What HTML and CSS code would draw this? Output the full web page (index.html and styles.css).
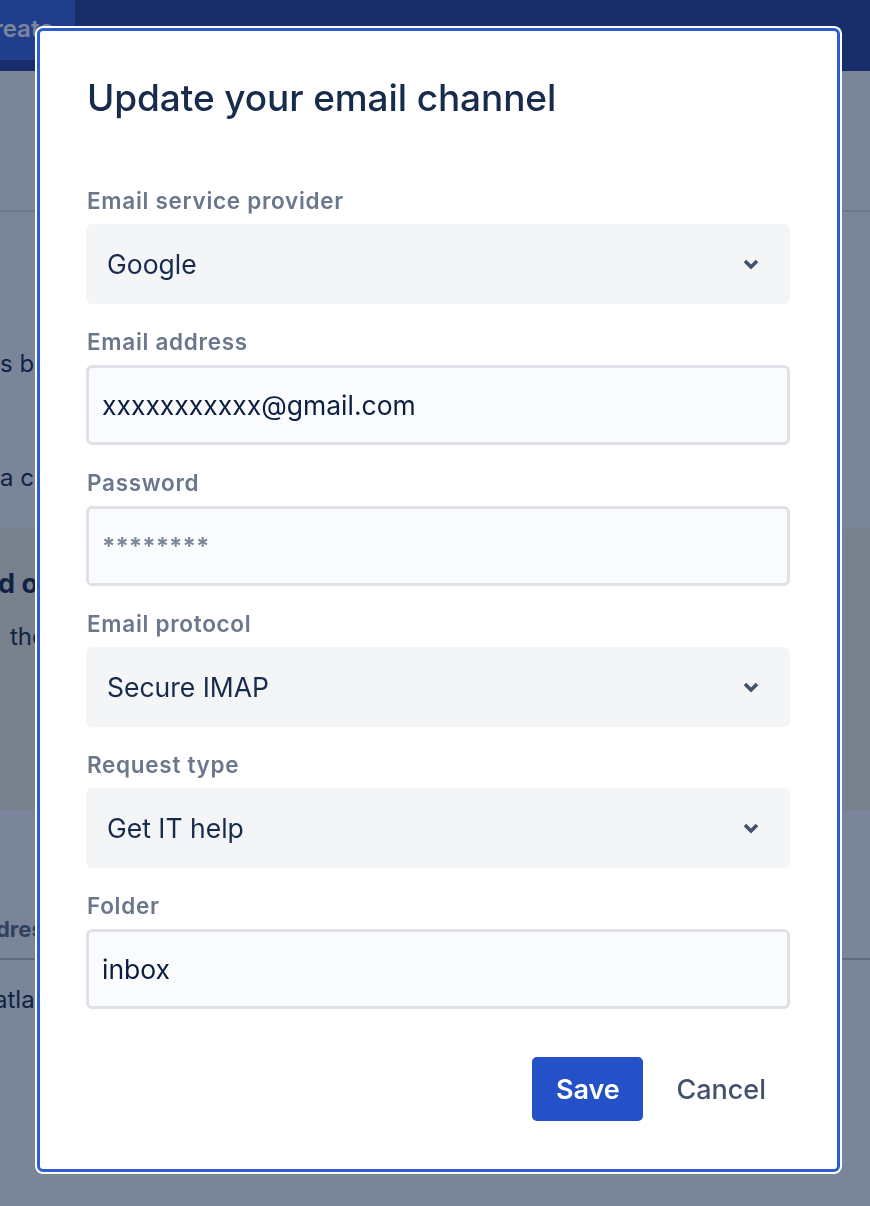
FILE: index.html
```html
<!DOCTYPE html>
<html lang="en">
<head>
<meta charset="utf-8">
<title>Update your email channel</title>
<link rel="stylesheet" href="styles.css">
</head>
<body>
<div class="page">
  <header class="nav">
    <div class="create">Create</div>
  </header>
  <div class="page-head"></div>
  <main class="content">
    <p class="para first">s be sent to your service project as requests.</p>
    <p class="para second">a customer emails this address, a request is created.</p>
    <section class="panel">
      <h3 class="panel-title">d other email addresses</h3>
      <p class="panel-text">the email channel to receive requests.</p>
    </section>
    <div class="table-head">dress</div>
    <div class="table-row">atlassian-support@example.com</div>
  </main>
</div>

<div class="overlay">
  <div class="modal">
    <h1 class="title">Update your email channel</h1>

    <div class="field">
      <div class="label">Email service provider</div>
      <div class="select"><span>Google</span>
        <svg class="chev" width="18" height="12" viewBox="0 0 18 12"><path d="M3 3 L9 9 L15 3" fill="none" stroke="#42526e" stroke-width="3.6"/></svg>
      </div>
    </div>

    <div class="field">
      <div class="label">Email address</div>
      <div class="input">xxxxxxxxxxx@gmail.com</div>
    </div>

    <div class="field">
      <div class="label">Password</div>
      <div class="input password">********</div>
    </div>

    <div class="field">
      <div class="label">Email protocol</div>
      <div class="select"><span>Secure IMAP</span>
        <svg class="chev" width="18" height="12" viewBox="0 0 18 12"><path d="M3 3 L9 9 L15 3" fill="none" stroke="#42526e" stroke-width="3.6"/></svg>
      </div>
    </div>

    <div class="field">
      <div class="label">Request type</div>
      <div class="select"><span>Get IT help</span>
        <svg class="chev" width="18" height="12" viewBox="0 0 18 12"><path d="M3 3 L9 9 L15 3" fill="none" stroke="#42526e" stroke-width="3.6"/></svg>
      </div>
    </div>

    <div class="field">
      <div class="label">Folder</div>
      <div class="input">inbox</div>
    </div>

    <div class="footer">
      <button class="btn primary">Save</button>
      <button class="btn subtle">Cancel</button>
    </div>
  </div>
</div>
</body>
</html>
```

FILE: styles.css
```css
* { box-sizing: border-box; }
html, body { margin: 0; padding: 0; }
body {
  width: 870px;
  height: 1206px;
  overflow: hidden;
  background: #ffffff;
  font-family: Inter, "Noto Sans", "Liberation Sans", sans-serif;
  color: #172b4d;
}

/* ---------- background page ---------- */
.page { width: 870px; height: 1206px; overflow: hidden; }
.nav {
  height: 71px;
  background: #2a439b;
  display: flex;
  align-items: stretch;
}
.create {
  margin-left: -30px;
  width: 105px;
  padding-left: 6px;
  background: #3b64e3;
  border-radius: 0 0 10px 0;
  color: #fff;
  font-size: 24px;
  font-weight: 600;
  line-height: 58px;
  height: 60px;
}
.page-head {
  height: 141px;
  border-bottom: 2px solid #dfe1e6;
}
.content { padding-top: 137px; }
.para {
  margin: 0;
  font-size: 24px;
  line-height: 30px;
  white-space: nowrap;
}
.para.second { margin-top: 84px; }
.panel {
  margin-top: 36px;
  height: 281px;
  background: #fff6e6;
  padding-top: 38px;
}
.panel-title {
  margin: 0;
  font-size: 27px;
  font-weight: 700;
  line-height: 34px;
  margin-left: -2px;
  white-space: nowrap;
}
.panel-text {
  margin: 21px 0 0 10px;
  font-size: 24px;
  line-height: 30px;
  white-space: nowrap;
}
.table-head {
  margin-top: 104px;
  margin-left: -4px;
  font-size: 22px;
  font-weight: 700;
  color: #5e6c84;
  line-height: 30px;
  height: 46px;
  border-bottom: 2px solid #c1c7d0;
  width: 900px;
}
.table-row {
  margin-top: 25px;
  margin-left: -6px;
  font-size: 24px;
  line-height: 30px;
  white-space: nowrap;
}

/* ---------- overlay & modal ---------- */
.overlay {
  position: fixed;
  inset: 0;
  background: rgba(9, 30, 66, 0.54);
  padding: 28px 0 0 37px;
}
.modal {
  width: 803px;
  background: #ffffff;
  border: 3px solid #2c5ed0;
  border-radius: 6px;
  box-shadow: 0 0 0 2px #ffffff;
  padding: 44px 47px 48px 46px;
}
.title {
  margin: 0 0 0 1px;
  font-size: 37px;
  line-height: 46px;
  font-weight: 500;
  letter-spacing: -0.1px;
  color: #172b4d;
}
.field { margin-top: 24px; }
.field:first-of-type { margin-top: 66px; }
.label {
  font-size: 22.5px;
  font-weight: 600;
  line-height: 28px;
  letter-spacing: 0.7px;
  color: #6b778c;
  margin-left: 1px;
  margin-bottom: 9px;
}
.select {
  height: 80px;
  border-radius: 6px;
  background: #f4f5f7;
  display: flex;
  align-items: center;
  justify-content: space-between;
  padding: 0 30px 0 21px;
  font-size: 26.5px;
  color: #172b4d;
}
.chev { display: block; }
.input {
  height: 80px;
  border-radius: 6px;
  background: #fafbfc;
  border: 3px solid #dfe1e6;
  display: flex;
  align-items: center;
  padding-left: 13px;
  font-size: 26.5px;
  color: #091e42;
}
.input.password {
  font-size: 24px;
  font-weight: 700;
  letter-spacing: 0;
  color: #7a869a;
  padding-left: 13px;
}
.footer {
  margin-top: 48px;
  display: flex;
  justify-content: flex-end;
  gap: 9px;
}
.btn {
  font-family: inherit;
  font-size: 27px;
  height: 64px;
  border: none;
  border-radius: 5px;
  padding: 0 24px;
  cursor: pointer;
}
.btn.primary {
  width: 111px;
  padding: 0;
  background: #2451c7;
  color: #ffffff;
  font-weight: 600;
}
.btn.subtle {
  background: transparent;
  color: #42526e;
  font-weight: 500;
}
```
